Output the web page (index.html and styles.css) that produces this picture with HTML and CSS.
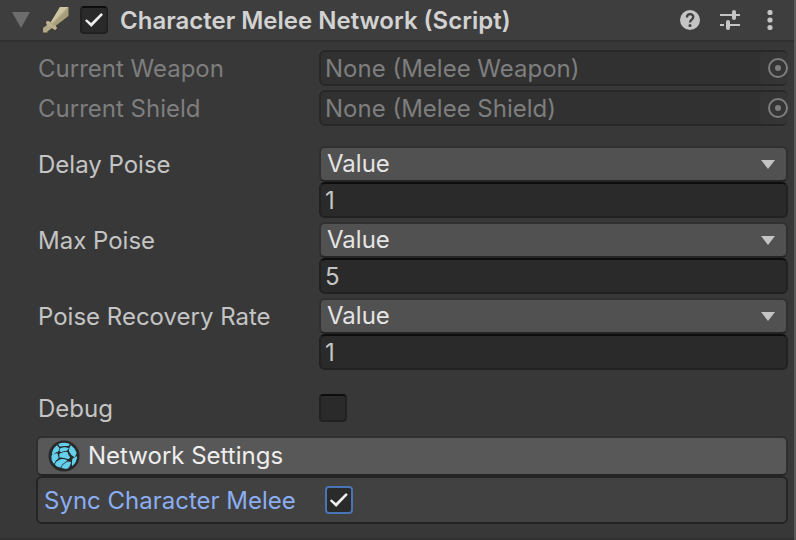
FILE: index.html
```html
<!DOCTYPE html>
<html lang="en">
<head>
<meta charset="utf-8">
<title>Inspector</title>
<link rel="stylesheet" href="styles.css">
</head>
<body>
<main class="inspector">
  <header class="component-header">
    <button class="icon-button foldout" aria-label="Collapse component">
      <svg width="18" height="16" viewBox="0 0 18 16"><path d="M0 0H18L9 16Z" fill="#6d6d6d"/></svg>
    </button>
    <svg class="sword" width="28" height="28" viewBox="0 0 28 28" aria-hidden="true">
      <path d="M18 1H27V10L14 20L15 22L13 24L10 22L6 25V27H1V22L5 19L4 16L6 15L9 16Z" fill="#b3a987"/>
      <path d="M18 1H26L10 17L9 16Z" fill="#cdc4a0"/>
      <path d="M27 2V10L14 20L11 18Z" fill="#a89d7b"/>
      <path d="M4 16L6 15L9 18L11 20L15 22L13 24L9 21L5 19Z" fill="#beb48c"/>
      <path d="M27 1V10L14 20M6 25V27H1" fill="none" stroke="#403d32"/>
    </svg>
    <input class="check" type="checkbox" aria-label="Component enabled" checked>
    <h1 class="title">Character Melee Network (Script)</h1>
    <div class="actions">
      <button class="icon-button" aria-label="Help">
        <svg width="20" height="20" viewBox="0 0 20 20"><circle cx="10" cy="10" r="10" fill="#c4c4c4"/><path d="M6.9 7.4C6.9 3 13.3 3.2 13.3 7C13.3 9.6 10 9.5 10 12.4" fill="none" stroke="#3e3e3e" stroke-width="2.2"/><circle cx="10" cy="15.6" r="1.5" fill="#3e3e3e"/></svg>
      </button>
      <button class="icon-button" aria-label="Presets">
        <svg width="20" height="20" viewBox="0 0 20 20" stroke="#c4c4c4"><path d="M0 5H13M16 5H20M0 15H4M8 15H20" stroke-width="2"/><path d="M14 2V8M8 12V18" stroke-width="4" stroke-linecap="round"/></svg>
      </button>
      <button class="icon-button" aria-label="More options">
        <svg width="20" height="20" viewBox="0 0 20 20" fill="#c4c4c4"><circle cx="10" cy="2.5" r="2.6"/><circle cx="10" cy="10" r="2.6"/><circle cx="10" cy="17.5" r="2.6"/></svg>
      </button>
    </div>
  </header>

  <form class="properties">
    <div class="group">
      <div class="row disabled">
        <label for="weapon">Current Weapon</label>
        <div class="object-field">
          <input id="weapon" class="field" type="text" value="None (Melee Weapon)" disabled>
          <button class="picker" type="button" aria-label="Select weapon" disabled>
            <svg width="20" height="20" viewBox="0 0 20 20"><circle cx="10" cy="10" r="9" fill="none" stroke="#7e7e7e" stroke-width="2"/><circle cx="10" cy="10" r="3" fill="#7e7e7e"/></svg>
          </button>
        </div>
      </div>
      <div class="row disabled">
        <label for="shield">Current Shield</label>
        <div class="object-field">
          <input id="shield" class="field" type="text" value="None (Melee Shield)" disabled>
          <button class="picker" type="button" aria-label="Select shield" disabled>
            <svg width="20" height="20" viewBox="0 0 20 20"><circle cx="10" cy="10" r="9" fill="none" stroke="#7e7e7e" stroke-width="2"/><circle cx="10" cy="10" r="3" fill="#7e7e7e"/></svg>
          </button>
        </div>
      </div>
    </div>

    <div class="group">
      <div class="row">
        <label for="delay">Delay Poise</label>
        <div class="value-stack">
          <div class="dropdown"><select aria-label="Delay Poise source"><option>Value</option></select></div>
          <input id="delay" class="field" type="text" inputmode="decimal" value="1">
        </div>
      </div>
      <div class="row">
        <label for="max">Max Poise</label>
        <div class="value-stack">
          <div class="dropdown"><select aria-label="Max Poise source"><option>Value</option></select></div>
          <input id="max" class="field" type="text" inputmode="decimal" value="5">
        </div>
      </div>
      <div class="row">
        <label for="rate">Poise Recovery Rate</label>
        <div class="value-stack">
          <div class="dropdown"><select aria-label="Poise Recovery Rate source"><option>Value</option></select></div>
          <input id="rate" class="field" type="text" inputmode="decimal" value="1">
        </div>
      </div>
    </div>

    <div class="row">
      <label for="debug">Debug</label>
      <div class="check-cell"><input id="debug" class="check" type="checkbox"></div>
    </div>

    <section class="network">
      <h2 class="network-title">
        <svg width="32" height="32" viewBox="0 0 32 32" aria-hidden="true">
          <circle cx="16" cy="16" r="15.5" fill="#28292b"/>
          <g fill="#64d0ec" stroke="#64d0ec" stroke-width="1.2" stroke-linejoin="round">
            <path d="M11 4.3Q16 2.5 21 4.3L20 5.5Q15 5 12 5.8Z"/>
            <path d="M9 6L11 8.5L9.5 11.5Q6.5 12 4.5 14Q5 9 9 6Z"/>
            <path d="M13 8.5Q17 7 20 8.5L18.5 10.2Q15.5 10.5 13 11.5L12 10.5Z"/>
            <path d="M23 6Q27 9 28 13L26.5 16.5Q23 14.5 21.5 11L22 8Z"/>
            <path d="M4 16Q6.5 13.5 9 14L10 18Q7 20 6 23Q3.5 20 4 16Z"/>
            <path d="M12 14Q16 12 19 12.5Q20 16 21.500 17.500L20 18.500Q15 16.500 12 17Z"/>
            <path d="M12 20Q15 18.800 18.500 20.500Q14 23 12 27Q9 26.500 7.500 24.500Q8.500 21.500 12 20Z"/>
            <path d="M20 22L22.500 22.500Q22 25.500 19.500 28Q16.500 28.500 14 27.500Q15.500 24 20 22Z"/>
            <path d="M25 19L28.500 17Q28 22 24.500 25L24.500 22Z"/>
          </g>
        </svg>
        Network Settings
      </h2>
      <div class="network-body">
        <label for="sync">Sync Character Melee</label>
        <input id="sync" class="check focused" type="checkbox" checked>
      </div>
    </section>
  </form>
</main>
</body>
</html>
```

FILE: styles.css
```css
* {
  box-sizing: border-box;
}

body {
  margin: 0;
  background: #383838;
  color: #c4c4c4;
  font: 24px/32px Inter, sans-serif;
}

button,
input,
select {
  margin: 0;
  font: inherit;
  color: inherit;
}

svg {
  display: block;
  flex: none;
}

.inspector {
  min-height: 100vh;
  border-right: 2px solid #5a5a5a;
}

.component-header {
  display: flex;
  align-items: center;
  height: 42px;
  padding: 0 14px 0 12px;
  background: #3e3e3e;
  border-bottom: 2px solid #303030;
}

.icon-button {
  display: block;
  padding: 0;
  border: 0;
  background: none;
}

.sword {
  margin: 0 10px 0 12px;
}

.title {
  flex: 1;
  margin: 0 0 0 12px;
  padding-top: 2px;
  color: #d2d2d2;
  font-size: 24px;
  font-weight: 600;
}

.actions {
  display: flex;
  gap: 20px;
}

.check {
  appearance: none;
  display: grid;
  place-items: center;
  flex: none;
  width: 28px;
  height: 28px;
  background: #2a2a2a;
  border: 2px solid #212121;
  border-top-color: #0d0d0d;
  border-radius: 4px;
}

.check:checked::before {
  content: "";
  width: 18px;
  height: 14px;
  background: #eeeeee;
  clip-path: polygon(0 56%, 9% 44%, 34% 72%, 90% 0, 100% 12%, 35% 100%);
}

.check.focused {
  border-color: #4876b5;
}

.properties {
  padding: 8px 6px 14px 36px;
  border-bottom: 2px solid #303030;
}

.group {
  display: grid;
  gap: 4px;
  margin-bottom: 20px;
}

.row {
  display: grid;
  grid-template-columns: 283px 1fr;
  align-items: start;
}

.row > label {
  padding: 3px 2px 1px;
  white-space: nowrap;
}

.disabled {
  color: #7e7e7e;
}

.field {
  display: block;
  width: 100%;
  height: 36px;
  padding: 0 4px;
  background: #2a2a2a;
  border: 2px solid #212121;
  border-top-color: #0d0d0d;
  border-radius: 6px;
}

.object-field {
  display: flex;
  align-items: center;
  height: 36px;
  background: #313131;
  border: 2px solid #282828;
  border-radius: 6px;
}

.object-field .field {
  flex: 1;
  min-width: 0;
  height: 32px;
  padding: 2px 4px 0;
  background: none;
  border: 0;
}

.picker {
  display: flex;
  align-items: center;
  justify-content: end;
  width: 28px;
  height: 32px;
  margin-right: -2px;
  padding: 0;
  background: #353535;
  border: 0;
  border-radius: 4px;
}

.dropdown {
  position: relative;
}

.dropdown::after {
  content: "";
  position: absolute;
  top: 14px;
  right: 13px;
  width: 14px;
  height: 9px;
  background: #c4c4c4;
  clip-path: polygon(0 0, 100% 0, 50% 100%);
  pointer-events: none;
}

select {
  appearance: none;
  display: block;
  width: 100%;
  height: 36px;
  padding: 0 6px;
  background: #515151;
  border: 2px solid #303030;
  border-bottom-color: #242424;
  border-radius: 6px;
}

.dropdown select {
  color: #e4e4e4;
}

.check-cell {
  padding: 4px 0;
}

.network {
  margin-top: 10px;
}

.network-title {
  display: flex;
  align-items: center;
  gap: 8px;
  height: 40px;
  margin: 0;
  padding: 0 10px;
  line-height: 34px;
  background: #585858;
  border: 2px solid #303030;
  border-bottom-color: #242424;
  border-radius: 6px;
  color: #eeeeee;
  font-size: 24px;
  font-weight: 400;
}

.network-body {
  display: flex;
  align-items: center;
  gap: 29px;
  height: 48px;
  padding: 0 6px;
  background: #414141;
  border: 2px solid #242424;
  border-radius: 6px;
  color: #8baef2;
}

.network-body label {
  padding-top: 2px;
}
```
